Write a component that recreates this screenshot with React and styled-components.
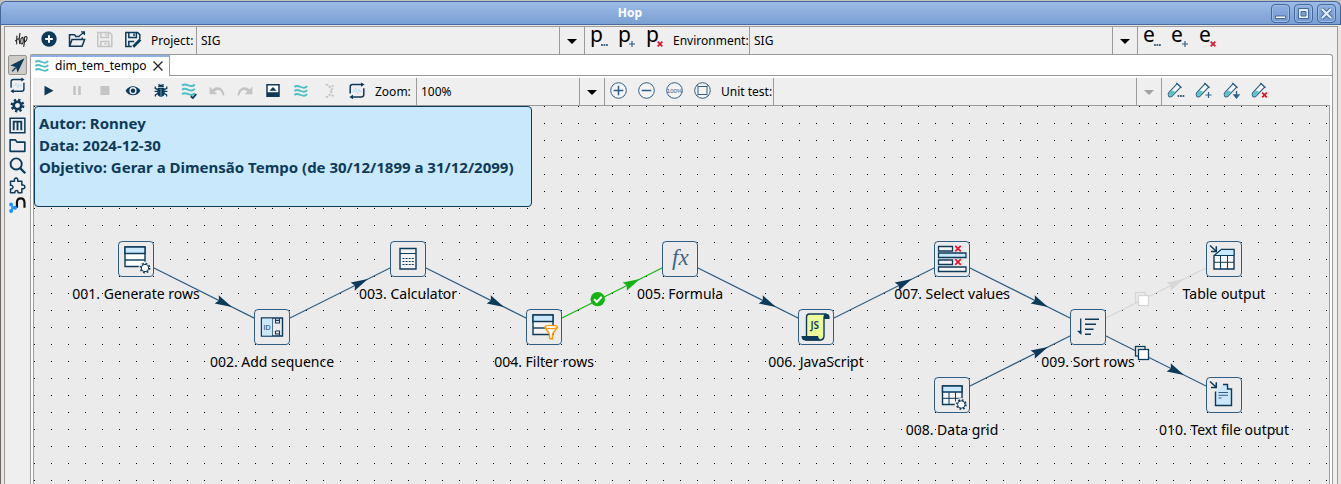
import React from "react";
import styled, { createGlobalStyle, css } from "styled-components";

const NAVY = "#0e3a5a";
const STEEL = "#2f5f86";
const SKY = "#c9e8fb";
const TEAL = "#4fbfc4";
const RED = "#e8112d";
const LINE = "#9a9a9a";
const PANEL = "#efefef";

const GlobalStyle = createGlobalStyle`
  * { box-sizing: border-box; }
  body { margin: 0; background: #c2c1bc; overflow: hidden; }
  button, select { font: inherit; color: inherit; }
`;

/* ---------- window ---------- */

const Window = styled.div`
  display: flex;
  flex-direction: column;
  min-height: 100vh;
  padding-top: 1px;
  font: 12px/18px "Noto Sans", sans-serif;
  color: #000;
`;

const TitleBar = styled.header`
  display: flex;
  align-items: center;
  height: 24px;
  padding-right: 4px;
  border: 1px solid #44689c;
  border-bottom-color: #47699b;
  border-radius: 6px 6px 0 0;
  background: linear-gradient(#9dbbe6, #7a9fd3);
`;

const Title = styled.h1`
  flex: 1;
  margin: 0 12px 0 0;
  font-size: 12px;
  font-weight: 700;
  text-align: center;
  color: #fff;
`;

const WindowButtons = styled.div`
  display: flex;
  gap: 4px;
`;

const WindowButton = styled.button`
  display: grid;
  place-items: center;
  width: 19px;
  height: 19px;
  padding: 0;
  border: 1px solid #44689c;
  border-radius: 4px;
  background: linear-gradient(#8fb0e0, #7398cf);
  box-shadow: inset 0 0 0 1px #9dbbe6;
`;

const Frame = styled.div`
  flex: 1;
  display: flex;
  padding: 1px 3px 0;
  border-left: 1px solid #6a6664;
  background: #e9e5e3;
`;

const Content = styled.main`
  flex: 1;
  display: flex;
  flex-direction: column;
  min-width: 0;
  border: 1px solid ${LINE};
  border-bottom: 0;
  background: ${PANEL};
`;

/* ---------- toolbars ---------- */

const Toolbar = styled.div`
  display: flex;
  align-items: stretch;
  height: 27px;
  padding-left: 2px;
  background: ${PANEL};
`;

const ToolButton = styled.button`
  flex: none;
  display: grid;
  place-items: center;
  width: 28px;
  height: 26px;
  padding: 0;
  border: 0;
  background: none;
`;

const ToolLabel = styled.label`
  flex: none;
  width: ${(p) => p.$width}px;
  padding-left: 4px;
  line-height: 27px;
  white-space: nowrap;
`;

const Combo = styled.div`
  position: relative;
  flex: none;
  width: ${(p) => p.$width}px;
`;

const ComboSelect = styled.select`
  appearance: none;
  display: block;
  width: 100%;
  height: 27px;
  padding: 0 28px 0 4px;
  border: solid ${LINE};
  border-width: 0 1px;
  border-radius: 0;
  background: ${PANEL};
  opacity: 1;
`;

const ComboArrow = styled.span`
  position: absolute;
  inset: 0 1px 0 auto;
  display: grid;
  place-items: center;
  width: 25px;
  padding-top: 2px;
  border-left: 1px solid ${LINE};
  pointer-events: none;
`;

const Workspace = styled.div`
  flex: 1;
  display: flex;
  padding-right: 4px;
`;

const SideBar = styled.nav`
  flex: none;
  display: flex;
  flex-direction: column;
  width: 25px;
  padding: 1px 3px 0;
`;

const SideButton = styled.button`
  display: grid;
  place-items: center;
  width: 19px;
  height: 20px;
  padding: 0;
  border: 1px solid transparent;
  border-radius: 2px;
  background: none;
  ${(p) =>
    p.$active &&
    css`
      border-color: #98948f;
      background: #cfcbc6;
    `}
`;

/* ---------- editor ---------- */

const Folder = styled.section`
  flex: 1;
  display: flex;
  flex-direction: column;
  min-width: 0;
  border: 1px solid ${LINE};
  border-bottom: 0;
  border-radius: 2px 3px 0 0;
  background: #fff;
`;

const TabStrip = styled.div`
  display: flex;
  height: 21px;
`;

const Tab = styled.div`
  display: flex;
  align-items: center;
  gap: 4px;
  padding: 0 4px 2px 2px;
  border-top: 2px solid #8fb0e2;
  border-right: 1px solid ${LINE};
`;

const TabClose = styled.button`
  display: grid;
  place-items: center;
  width: 14px;
  height: 16px;
  padding: 0;
  border: 0;
  background: none;
`;

const TabFiller = styled.div`
  flex: 1;
  border-bottom: 1px solid ${LINE};
`;

const Editor = styled.div`
  flex: 1;
  display: flex;
  flex-direction: column;
  margin: 2px 2px 0;
`;

const Canvas = styled.div`
  position: relative;
  flex: 1;
  min-height: 340px;
  overflow: hidden;
  border: 1px solid ${LINE};
  border-bottom: 0;
  background: #ebebeb conic-gradient(from 270deg at 1px 1px, #000 90deg, #ebebeb 0) 0 0 / 17px 17px;
`;

const Note = styled.div`
  position: absolute;
  left: 0;
  top: 0;
  width: 498px;
  height: 101px;
  padding: 5px 4px;
  border: 1px solid ${NAVY};
  border-radius: 4px;
  background: ${SKY};
  color: ${NAVY};
  font-size: 15px;
  font-weight: 700;
  line-height: 22px;
  white-space: nowrap;
`;

const NoteLine = styled.p`
  margin: 0;
`;

const HopLayer = styled.svg`
  position: absolute;
  left: 0;
  top: 0;
  width: 100%;
  height: 100%;
`;

const Node = styled.div`
  position: absolute;
  left: ${(p) => p.$x}px;
  top: ${(p) => p.$y}px;
  display: flex;
  flex-direction: column;
  align-items: center;
  gap: 7px;
  width: 36px;
`;

const NodeBox = styled.div`
  width: 36px;
  height: 36px;
  border: 1px solid ${STEEL};
  border-radius: 4px;
  background: #ebebeb;
`;

const NodeName = styled.span`
  font-size: 14px;
  line-height: 20px;
  white-space: nowrap;
`;

const NodeSvg = styled.svg`
  display: block;
  margin: -1px;
`;

/* ---------- icons ---------- */

const Icon = ({ size = 18, box = 18, children, color = NAVY }) => (
  <svg width={size} height={size} viewBox={`0 0 ${box} ${box}`} fill="none" stroke={color} strokeWidth="1.5" overflow="visible" aria-hidden="true">
    {children}
  </svg>
);

const HopLogo = () => (
  <Icon color="#222">
    <path strokeWidth="1.1" d="M4.6 4.6C5.6 6 4 9 4.8 13.4M8 2C6.900 6 7 10 7.800 13.200M3.200 10.200C4.800 8 6.600 7 8 8.200M10 6.400C8.200 8 8.400 12.800 9.800 13C11.600 13 11.800 6.200 10 6.200M12.300 5.600C12.900 9 12.400 13 11.600 15.800M12.500 6.800C13.800 4.600 15.800 5.400 14.800 8.400C14.200 10.400 13 10.800 12.500 10.400" />
  </Icon>
);
const NewIcon = () => (
  <Icon>
    <circle cx="9" cy="8" r="7.7" fill={NAVY} stroke="none" />
    <path d="M9 4.2v7.6M5.2 8h7.6" stroke="#fff" strokeWidth="2" />
  </Icon>
);
const OpenIcon = () => (
  <Icon>
    <path d="M1.5 8V3.700h5l1.200 1.800h4M1.500 8v7.200h12.600L16.600 8.400H4L1.700 15M14.200 8.200V6.600" />
    <path d="M11.300 5L16 1.200M13 .9h3.400v3.200" strokeWidth="1.300" />
  </Icon>
);
const SaveIcon = ({ edit, color }) => (
  <Icon color={color}>
    <path d={edit ? "M15.8 8V3.6L13.5 1.4H1.8v14.2h6" : "M1.8 1.4h11.7l2.3 2.3v11.9h-14z"} />
    <path d="M4.8 1.6v5h7.6v-5M10 2.6v2.4" />
    {edit ? (
      <>
        <path d="M4.8 15.4v-5h5.4" />
        <path d="M9.2 15.8L16.4 8.4" strokeWidth="2.8" />
      </>
    ) : (
      <path d="M4.8 15.4v-5h8v5M8.5 12.8h2" />
    )}
  </Icon>
);
const Cross = ({ x, y, r = 2.3, w = 1.7 }) => (
  <path d={`M${x - r} ${y - r}l${2 * r} ${2 * r}M${x + r} ${y - r}l${-2 * r} ${2 * r}`} stroke={RED} strokeWidth={w} />
);
const Mark = ({ kind, x, y }) => {
  if (kind === "edit") return <path d={`M${x - 3} ${y + 1}h7`} strokeDasharray="1.8 0.7" stroke={NAVY} strokeWidth="1.4" />;
  if (kind === "add") return <path d={`M${x - 3} ${y}h6M${x} ${y - 3}v6`} stroke={STEEL} strokeWidth="1.2" />;
  if (kind === "down") return <path d={`M${x} ${y - 4}v7M${x - 2.4} ${y}l2.4 3 2.4-3z`} fill={NAVY} strokeWidth="1.3" />;
  return <Cross x={x} y={y} />;
};
const Letter = styled.text`
  font: 21px "Noto Sans", sans-serif;
  fill: #000;
  stroke: none;
`;
const LetterIcon = ({ letter, kind }) => (
  <Icon size={20} box={20}>
    <Letter x="1" y="12">{letter}</Letter>
    <Mark kind={kind} x={15} y={14} />
  </Icon>
);

const PlayIcon = () => (<Icon><path d="M4.500 3.800v9.800l9-4.900z" fill={NAVY} stroke="none" /></Icon>);
const PauseIcon = () => (<Icon><path d="M5.200 4h2.600v9H5.200zM10.200 4h2.600v9h-2.600z" fill="#c4c4c4" stroke="none" /></Icon>);
const StopIcon = () => (<Icon><path d="M4.400 4h9v9h-9z" fill="#c4c4c4" stroke="none" /></Icon>);
const EyeIcon = () => (
  <Icon>
    <path d="M1.600 8.700C4.600 2.600 13.400 2.600 16.400 8.700C13.400 14.800 4.600 14.800 1.600 8.700z" fill={NAVY} stroke="none" />
    <circle cx="9" cy="8.700" r="3.600" fill={PANEL} stroke="none" />
    <circle cx="9" cy="8.700" r="2.200" fill={NAVY} stroke="none" />
  </Icon>
);
const BugIcon = () => (
  <Icon>
    <path d="M5.400 6h7.200v5.200C12.600 16 5.400 16 5.400 11.200zM6 5.200C6 1.600 12 1.600 12 5.200z" fill={NAVY} stroke="none" />
    <path d="M3.200 4.400v2l2.400 1.200M14.800 4.400v2l-2.400 1.200M2.600 9.400h12.800M3.400 14.600v-1.800l2.600-1.400M14.600 14.600v-1.800L12 11.400M6.600 2.200l1 1.400M11.400 2.200l-1 1.400" strokeWidth="1.300" />
    <path d="M9 7v7" stroke="#8fa9bd" strokeWidth=".8" />
  </Icon>
);
const waves = "c2.4-2 4.3-.9 6.4 0s4.3 1.3 6.400-.9";
const PipelineIcon = ({ check }) => (
  <Icon color={TEAL}>
    {check ? (
      <>
        <path d={`M2 3.400${waves}M2 7.800${waves}M2 12.200${waves}`} strokeWidth="2" />
        <path d="M10.800 14.200l2.100 1.800 3.400-4" stroke={NAVY} strokeWidth="1.800" />
      </>
    ) : (
      <path d={`M2.400 5${waves}M2.400 9${waves}M2.400 13${waves}`} strokeWidth="1.900" />
    )}
  </Icon>
);
const UndoIcon = ({ flip }) => (
  <Icon>
    <path transform={flip ? "translate(18 0) scale(-1 1)" : undefined} d="M1.600 4.400v7.800h7.600L6.600 9.600C9.600 6.600 13.400 7.800 14.800 13.400H16.400C16.200 5.400 8.800 2.800 4.400 7.400z" fill="#c4c4c4" stroke="none" />
  </Icon>
);
const ResultsIcon = () => (
  <Icon>
    <path d="M3 2.700h12v11.600H3z" fill="#fff" />
    <path d="M3 10.200h12v4.400H3zM5.400 8.800L9 5l3.600 3.800z" fill={NAVY} stroke="none" />
  </Icon>
);
const BranchIcon = () => (
  <Icon color="#c2c2c2">
    <path d="M5.600 2.600q3.600 0 4 2.600l4-1.600M5.600 15q3.600 0 4-2.600l4 1.600M12.800 6.400l-2.600 2.400 2.600 2.400" strokeWidth="1.600" strokeDasharray="2.600 1" />
  </Icon>
);
const WorkflowIcon = ({ size }) => (
  <Icon size={size}>
    <path d="M14.400 2.600H4.600Q2.200 2.600 2.200 5v6.400M3.600 15h9.800q2.400 0 2.400-2.400V6.200" />
    <path d="M13 .4l3.600 2.200L13 4.800zM5 12.800L1.400 15 5 17.200z" fill={NAVY} stroke="none" />
    <path d="M4.400 9.400h1.800l1.400-3 1.800 5 1.600-4 1 2h1.800" stroke="#b5dff8" strokeWidth="1" />
  </Icon>
);
const SmallText = styled.text`
  font: 6px "Liberation Sans", sans-serif;
  fill: ${STEEL};
  stroke: none;
  text-anchor: middle;
`;
const ZoomIcon = ({ kind }) => (
  <Icon color={STEEL}>
    <circle cx="8.500" cy="8.500" r="7.800" strokeWidth="1" fill="#f4f4f4" />
    {kind === "in" && <path d="M8.500 3.700v9.600M3.700 8.500h9.600" />}
    {kind === "out" && <path d="M3.700 8.500h9.600" />}
    {kind === "full" && <SmallText x="8.500" y="10.700">100%</SmallText>}
    {kind === "fit" && <path d="M4 4.500h9v8H4zM3.100 3.200L4 4.500M13.900 3.200L13 4.500M3.100 13.600L4 12.500M13.900 13.600L13 12.500" strokeWidth="1" />}
  </Icon>
);
const TubeIcon = ({ kind }) => (
  <Icon color={STEEL}>
    <path d="M10.200 1.600l3.600 3.400L5 14.200Q3.200 15.600 1.600 14Q.4 12.400 1.800 10.600z" strokeWidth="1.100" fill="#f6f9fb" />
    <path d="M4.600 8.400l4 1.400-4 4.200q-1.200 1-2.600-.2-.8-1.200.2-2.800z" fill="#5ec4c6" stroke="none" />
    <path d="M9.200 .8l5.400 5" strokeWidth="1.100" />
    <Mark kind={kind} x={13.5} y={13} />
  </Icon>
);

const PointerIcon = () => (<Icon size={17}><path d="M16.400 1.400L1.400 9l5.800 1.600 2 5.800z" fill={NAVY} stroke="none" /><path d="M7.200 11L3.400 15" /></Icon>);
const GearIcon = () => (
  <Icon size={17}>
    <circle cx="9" cy="9" r="6" strokeWidth="2.600" strokeDasharray="2.400 2.312" />
    <circle cx="9" cy="9" r="4" strokeWidth="2.800" />
  </Icon>
);
const MetadataIcon = () => (
  <Icon size={17}>
    <path d="M1.200 1.200h15.600v15.600H1.200z" strokeWidth="1.600" />
    <path d="M5 14V4.900h8V14M9 5v9" strokeWidth="2" />
  </Icon>
);
const FolderIcon = () => (<Icon size={17}><path d="M1.200 15.200V3h5.600l1.600 2.400h8.400v9.800z" strokeWidth="1.700" strokeLinejoin="round" /></Icon>);
const SearchIcon = () => (<Icon size={17}><circle cx="7.600" cy="7.400" r="5.900" strokeWidth="2" /><path d="M11.800 11.800l5.400 5.400" strokeWidth="2.400" /></Icon>);
const PuzzleIcon = () => (
  <Icon size={17}>
    <path strokeWidth="1.600" strokeLinejoin="round" d="M1.600 4.400h4.200C4.600 0 10.400 0 9.200 4.400h4.400v4.200c4.200-.8 4.200 4.600 0 3.800v4.200H9.600c.4-3-3.600-3-3.400 0H1.600v-4c3.600.4 3.400-4.200 0-3.800z" />
  </Icon>
);
const GraphIcon = () => (
  <Icon size={17}>
    <path d="M8.400 11.500V6Q8.600 1.500 12.400 1.500t4 4.500V11.500" stroke="#111" strokeWidth="2.300" />
    <g fill="#1e90ff" stroke="#1e90ff"><path d="M2.400 8.200l3.200 3.200-3.200 3.600M5.600 11.400h2" strokeWidth="1" /><circle cx="2.200" cy="8" r="1.300" /><circle cx="6.400" cy="11.400" r="1.300" /><circle cx="2.200" cy="14.800" r="1.300" /></g>
  </Icon>
);

/* ---------- transform icons, drawn on a 36px tile ---------- */

const Gear = ({ x = 27, y = 27 }) => (
  <g>
    <circle cx={x} cy={y} r="6.600" fill="#ebebeb" stroke="none" />
    <circle cx={x} cy={y} r="4.500" strokeWidth="1.800" strokeDasharray="1.700 1.830" />
    <circle cx={x} cy={y} r="3.700" fill="#fff" strokeWidth="1" />
  </g>
);
const InArrow = () => <path d="M4 4.500l6 5.500M10.300 5.200v5.300H5" strokeWidth="1.500" />;
const TinyId = styled.text`
  font: 7px "Liberation Sans", sans-serif;
  fill: ${NAVY};
  stroke: none;
`;
const Fx = styled.text`
  font: italic 23px "Liberation Serif", serif;
  fill: #3d6585;
  stroke: none;
`;
const JsText = styled.text`
  font: 600 10px "Noto Sans", sans-serif;
  fill: ${NAVY};
  stroke: none;
`;

const art = {
  rows: (
    <>
      <path d="M7 6h20v19.500H7z" fill="#fff" />
      <path d="M7 6h20v6.500H7z" fill={SKY} />
      <path d="M7 19h20" />
      <Gear />
    </>
  ),
  sequence: (
    <>
      <path d="M7.500 9h21v18h-21z" />
      <path d="M8 9.600h10v17H8z" fill={SKY} stroke="none" />
      <path d="M18.500 9v18" strokeWidth=".7" />
      <TinyId x="9.500" y="20.500">ID</TinyId>
      <path d="M21.500 9.500v4.500h4V9.500M21.500 11.400h4M21.500 22h4v4.600M21.500 22v3h4" strokeWidth="1.100" />
    </>
  ),
  calculator: (
    <>
      <path d="M10 7.500h16v20.500H10z" fill="#f4f4f4" />
      <path d="M10 12.500h16" strokeWidth="1" />
      <path d="M12.500 17.500h11.500M12.500 20.500h11.500M12.500 23.500h11.500" strokeDasharray="2 1.100" strokeWidth="1" />
    </>
  ),
  filter: (
    <>
      <path d="M7 6h20v19.500H7z" fill="#f4f4f4" />
      <path d="M7 6h20v6.500H7z" fill={SKY} />
      <path d="M7 19h20" />
      <path d="M19 18.500l4.500 6.500v4.500l3 .5v-5l4.800-6.500z" fill="#fff" stroke="#f59b0b" strokeLinejoin="round" />
      <ellipse cx="25.100" cy="18" rx="6.100" ry="1.600" fill="#fff" stroke="#f59b0b" />
    </>
  ),
  formula: <Fx x="10" y="24">fx</Fx>,
  script: (
    <>
      <path d="M24 5h5q3 0 2.600 5H26z" fill={NAVY} stroke="none" />
      <path d="M8.500 27.500V8Q8.500 5 11.500 5h17Q26 5.600 26 9v18q0 3.500-3 4H8z" fill="#ecfb9c" />
      <path d="M3.500 27h16.500q0 2.500 3 4.500H7.500Q3.500 31.500 3.500 27z" fill={NAVY} stroke="none" />
      <JsText x="12.500" y="20">JS</JsText>
    </>
  ),
  select: (
    <>
      <path d="M4.500 5.500h14v4.500h-14zM4.500 19h14v4.500h-14zM4.500 26h27.500v4.500H4.500z" fill="#f4f4f4" strokeWidth="1.300" />
      <path d="M4.500 12h27.500v4.500H4.500z" fill={SKY} strokeWidth="1.300" />
      <Cross x={24} y={7.6} r={2.8} />
      <Cross x={24} y={21} r={2.8} />
    </>
  ),
  sort: (
    <>
      <path d="M10.700 9.500v15" strokeWidth="1.300" />
      <path d="M7 21.800h4.300v4.200z" fill={NAVY} stroke="none" />
      <path d="M15 10.200h14M15 15.200h11M15 20.200h8.500M15 25.200h6" strokeWidth="1.500" />
    </>
  ),
  grid: (
    <>
      <path d="M8.500 9h19.500v18.500H8.500z" fill="#f4f4f4" />
      <path d="M8.500 9h19.500v6H8.500z" fill={SKY} />
      <path d="M15 15v12.500M21.500 15v12.500M8.500 21.300H28" strokeWidth="1" />
      <Gear x={27.3} y={27.5} />
    </>
  ),
  table: (
    <>
      <path d="M8 14.500V28h20V8.500H15.500z" fill="#fff" />
      <path d="M8.500 14.500L15.500 8.500H28v6z" fill={SKY} strokeWidth="1" />
      <path d="M14.500 14.500V28M21.500 14.500V28M8 21.300h20" strokeWidth="1" />
      <InArrow />
    </>
  ),
  file: (
    <>
      <path d="M9.500 14.500V28.500h16V12L20.500 7.500H16.500z" fill={SKY} stroke="none" />
      <path d="M9.500 14.500V28.500h16V12h-4V7.500H17" />
      <path d="M12.500 15.500h9.500M12.500 18.300h9.500M12.500 21h3" stroke={STEEL} strokeWidth="1" />
      <InArrow />
    </>
  ),
};

/* ---------- pipeline data ---------- */

const nodes = [
  { id: "gen", x: 84, y: 135, name: "001. Generate rows", icon: "rows" },
  { id: "seq", x: 220, y: 203, name: "002. Add sequence", icon: "sequence" },
  { id: "calc", x: 356, y: 135, name: "003. Calculator", icon: "calculator" },
  { id: "filter", x: 492, y: 203, name: "004. Filter rows", icon: "filter" },
  { id: "formula", x: 628, y: 135, name: "005. Formula", icon: "formula" },
  { id: "js", x: 764, y: 203, name: "006. JavaScript", icon: "script" },
  { id: "select", x: 900, y: 135, name: "007. Select values", icon: "select" },
  { id: "grid", x: 900, y: 271, name: "008. Data grid", icon: "grid" },
  { id: "sort", x: 1036, y: 203, name: "009. Sort rows", icon: "sort" },
  { id: "table", x: 1172, y: 135, name: "Table output", icon: "table" },
  { id: "file", x: 1172, y: 271, name: "010. Text file output", icon: "file" },
];

const hops = [
  { from: "gen", to: "seq" },
  { from: "seq", to: "calc" },
  { from: "calc", to: "filter" },
  { from: "filter", to: "formula", line: "#12b312", head: "#12b312", badge: "check" },
  { from: "formula", to: "js" },
  { from: "js", to: "select" },
  { from: "select", to: "sort" },
  { from: "grid", to: "sort" },
  { from: "sort", to: "table", line: "#d6d6d6", head: "#d6d6d6", badge: "copy" },
  { from: "sort", to: "file", badge: "copy" },
];

const Hop = ({ from, to, line = STEEL, head = NAVY, badge }) => {
  const a = nodes.find((n) => n.id === from);
  const b = nodes.find((n) => n.id === to);
  const [x1, y1, x2, y2] = [a.x + 18, a.y + 18, b.x + 18, b.y + 18];
  const at = (t) => [x1 + (x2 - x1) * t, y1 + (y2 - y1) * t];
  const [tx, ty] = at(0.705);
  const [bx, by] = at(0.395);
  const angle = (Math.atan2(y2 - y1, x2 - x1) * 180) / Math.PI;
  return (
    <g>
      <line x1={x1} y1={y1} x2={x2} y2={y2} stroke={line} strokeWidth="1.2" />
      <path d="M0 0L-17 -4.600L-14.500 0L-17 4.600z" fill={head} transform={`translate(${tx} ${ty}) rotate(${angle})`} />
      {badge === "check" && (
        <g>
          <circle cx={bx} cy={by - 1} r="7.2" fill={line} />
          <path d={`M${bx - 3.6} ${by - 1}l2.600 2.800 5-5.200`} fill="none" stroke="#fff" strokeWidth="2" />
        </g>
      )}
      {badge === "copy" && (
        <g stroke={head} strokeWidth="1.3" fill="#ebebeb" transform={`translate(${Math.round(bx)} ${Math.round(by) - 1})`}>
          <rect x="-6.500" y="-6.500" width="9.500" height="9.500" />
          <rect x="-3.500" y="-3.500" width="10" height="10" fill="#fff" />
        </g>
      )}
    </g>
  );
};

const Tool = ({ label, children, disabled }) => (
  <ToolButton type="button" aria-label={label} disabled={disabled}>{children}</ToolButton>
);

const ComboBox = ({ id, value, disabled, width = 389 }) => (
  <Combo $width={width}>
    <ComboSelect id={id} disabled={disabled}>{value && <option>{value}</option>}</ComboSelect>
    <ComboArrow>
      <svg width="10" height="5" viewBox="0 0 10 5" aria-hidden="true">
        <path d="M0 0h10L5 5z" fill={disabled ? "#a5a29f" : "#000"} />
      </svg>
    </ComboArrow>
  </Combo>
);

const perspectives = [
  ["Data orchestration", PointerIcon],
  ["Execution information", () => <WorkflowIcon size={17} />],
  ["Configuration", GearIcon],
  ["Metadata", MetadataIcon],
  ["Explorer", FolderIcon],
  ["Search", SearchIcon],
  ["Plugins", PuzzleIcon],
  ["Graph", GraphIcon],
];

export default function App() {
  return (
    <Window>
      <GlobalStyle />
      <TitleBar>
        <Title>Hop</Title>
        <WindowButtons>
          <WindowButton type="button" aria-label="Minimize">
            <svg width="13" height="13"><path d="M1.500 9h10v2.500h-10z" fill="#fff" stroke="#44689c" /></svg>
          </WindowButton>
          <WindowButton type="button" aria-label="Maximize">
            <svg width="13" height="13" fill="none"><path d="M1.500 1.500h10v10h-10z" fill="#e4edfa" stroke="#44689c" /><path d="M4 4.500h5v4.500H4z" fill="#7a9fd3" stroke="#44689c" /></svg>
          </WindowButton>
          <WindowButton type="button" aria-label="Close">
            <svg width="13" height="13"><path d="M2 2l9 9M11 2l-9 9" stroke="#44689c" strokeWidth="4" /><path d="M2 2l9 9M11 2l-9 9" stroke="#e4edfa" strokeWidth="2.200" /></svg>
          </WindowButton>
        </WindowButtons>
      </TitleBar>
      <Frame>
        <Content>
          <Toolbar>
            <Tool label="Hop"><HopLogo /></Tool>
            <Tool label="New"><NewIcon /></Tool>
            <Tool label="Open"><OpenIcon /></Tool>
            <Tool label="Save" disabled><SaveIcon color="#c4c4c4" /></Tool>
            <Tool label="Save as"><SaveIcon edit /></Tool>
            <ToolLabel htmlFor="project" $width={49}>Project:</ToolLabel>
            <ComboBox id="project" value="SIG" />
            <Tool label="Edit project"><LetterIcon letter="p" kind="edit" /></Tool>
            <Tool label="Add project"><LetterIcon letter="p" kind="add" /></Tool>
            <Tool label="Delete project"><LetterIcon letter="p" kind="delete" /></Tool>
            <ToolLabel htmlFor="environment" $width={80}>Environment:</ToolLabel>
            <ComboBox id="environment" value="SIG" />
            <Tool label="Edit environment"><LetterIcon letter="e" kind="edit" /></Tool>
            <Tool label="Add environment"><LetterIcon letter="e" kind="add" /></Tool>
            <Tool label="Delete environment"><LetterIcon letter="e" kind="delete" /></Tool>
          </Toolbar>
          <Workspace>
            <SideBar>
              {perspectives.map(([label, Glyph], i) => (
                <SideButton key={label} type="button" aria-label={label} $active={i === 0}><Glyph /></SideButton>
              ))}
            </SideBar>
            <Folder>
              <TabStrip>
                <Tab>
                  <PipelineIcon />
                  <span>dim_tem_tempo</span>
                  <TabClose type="button" aria-label="Close tab">
                    <svg width="10" height="10"><path d="M.5.5l9 9M9.500.5l-9 9" stroke="#222" strokeWidth="1.300" /></svg>
                  </TabClose>
                </Tab>
                <TabFiller />
              </TabStrip>
              <Editor>
                <Toolbar>
                  <Tool label="Run"><PlayIcon /></Tool>
                  <Tool label="Pause" disabled><PauseIcon /></Tool>
                  <Tool label="Stop" disabled><StopIcon /></Tool>
                  <Tool label="Preview"><EyeIcon /></Tool>
                  <Tool label="Debug"><BugIcon /></Tool>
                  <Tool label="Check pipeline"><PipelineIcon check /></Tool>
                  <Tool label="Undo" disabled><UndoIcon /></Tool>
                  <Tool label="Redo" disabled><UndoIcon flip /></Tool>
                  <Tool label="Show results"><ResultsIcon /></Tool>
                  <Tool label="Pipeline"><PipelineIcon /></Tool>
                  <Tool label="Branch" disabled><BranchIcon /></Tool>
                  <Tool label="Workflow"><WorkflowIcon /></Tool>
                  <ToolLabel htmlFor="zoom" $width={45}>Zoom:</ToolLabel>
                  <ComboBox id="zoom" value="100%" width={189} />
                  <Tool label="Zoom in"><ZoomIcon kind="in" /></Tool>
                  <Tool label="Zoom out"><ZoomIcon kind="out" /></Tool>
                  <Tool label="Zoom 100%"><ZoomIcon kind="full" /></Tool>
                  <Tool label="Fit to screen"><ZoomIcon kind="fit" /></Tool>
                  <ToolLabel htmlFor="unit-test" $width={56}>Unit test:</ToolLabel>
                  <ComboBox id="unit-test" disabled />
                  <Tool label="Edit test"><TubeIcon kind="edit" /></Tool>
                  <Tool label="Add test"><TubeIcon kind="add" /></Tool>
                  <Tool label="Attach test"><TubeIcon kind="down" /></Tool>
                  <Tool label="Delete test"><TubeIcon kind="delete" /></Tool>
                </Toolbar>
                <Canvas>
                  <HopLayer aria-hidden="true">
                    {hops.map((h) => <Hop key={h.from + h.to} {...h} />)}
                  </HopLayer>
                  <Note>
                    <NoteLine>Autor: Ronney</NoteLine>
                    <NoteLine>Data: 2024-12-30</NoteLine>
                    <NoteLine>Objetivo: Gerar a Dimensão Tempo (de 30/12/1899 a 31/12/2099)</NoteLine>
                  </Note>
                  {nodes.map((n) => (
                    <Node key={n.id} $x={n.x} $y={n.y}>
                      <NodeBox>
                        <NodeSvg width="36" height="36" fill="none" stroke={NAVY} strokeWidth="1.400" aria-hidden="true">{art[n.icon]}</NodeSvg>
                      </NodeBox>
                      <NodeName>{n.name}</NodeName>
                    </Node>
                  ))}
                </Canvas>
              </Editor>
            </Folder>
          </Workspace>
        </Content>
      </Frame>
    </Window>
  );
}
